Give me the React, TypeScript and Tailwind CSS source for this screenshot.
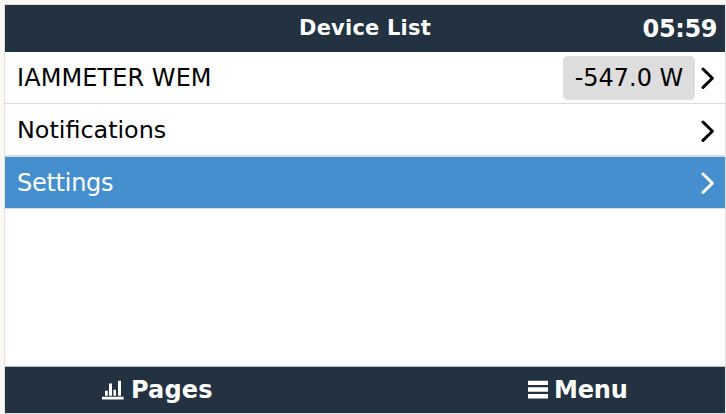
const rows = [
  { label: "IAMMETER WEM", value: "-547.0 W", spacing: "tracking-[0.07px]", offset: "" },
  { label: "Notifications", spacing: "text-[23.85px]", offset: "pt-[2px]" },
  { label: "Settings", active: true, spacing: "tracking-[-0.27px]", offset: "" },
];

function Chevron() {
  return (
    <svg width="14" height="22" viewBox="0 0 14 22" fill="none" stroke="currentColor" strokeWidth="3" strokeLinecap="round" strokeLinejoin="round" className="shrink-0">
      <path d="M2 2 L11.4 11.2 L2 20.4" />
    </svg>
  );
}

function BarsIcon() {
  return (
    <svg width="22" height="20" viewBox="0 0 22 20" fill="currentColor" className="shrink-0">
      <path d="M0 16.8h21.6v2.8H0zM3 10.8h2.8v5H3zM7 3.6h3v12.2H7zM11.4 9.7h2.6v6.1h-2.6zM16 .8h3v15h-3z" />
    </svg>
  );
}

function MenuIcon() {
  return (
    <svg width="20" height="19" viewBox="0 0 20 19" fill="currentColor" className="relative -top-px shrink-0">
      <path d="M0 .7h20v4.3H0zM0 7.2h20v4.5H0zM0 14.1h20v4.3H0z" />
    </svg>
  );
}

export default function App() {
  return (
    <div className="h-[414px] w-[726px] overflow-hidden bg-[#faf9f5] pl-1 pt-1 font-['DejaVu_Sans',sans-serif] text-[24px] leading-none">
      <div className="flex h-[410px] w-[722px] flex-col border border-[#e2e1dc] bg-white">
        <header className="grid h-[47px] shrink-0 grid-cols-[1fr_auto_1fr] items-center bg-[#233240] font-bold text-white">
          <span />
          <h1 className="pb-px text-[21px] tracking-[0.2px]">Device List</h1>
          <time className="pr-2 text-right tracking-[-0.4px]">05:59</time>
        </header>
        <main className="flex-1">
          {rows.map((row) => (
            <div
              key={row.label}
              className={
                row.active
                  ? "flex h-[53px] items-center border-y border-[#dcdcdc] bg-[#468fcf] pl-3 pr-[10px] text-white"
                  : `flex h-[52px] items-center border-b border-[#dcdcdc] pl-3 pr-[10px] text-black ${row.offset}`
              }
            >
              <span className={`flex-1 ${row.spacing}`}>{row.label}</span>
              {row.value && (
                <span className="mr-[6px] flex h-[44px] w-[132px] items-center justify-center rounded-[5px] bg-[#dddddd]">
                  {row.value}
                </span>
              )}
              <Chevron />
            </div>
          ))}
        </main>
        <footer className="flex h-[47px] shrink-0 items-center border-t border-[#b9bec2] bg-[#233240] font-bold text-white">
          <button className="flex w-1/2 items-center gap-[7px] pl-[97px] tracking-[0.15px]">
            <BarsIcon />
            Pages
          </button>
          <button className="flex w-1/2 items-center gap-[6px] pl-[163px] tracking-[-0.15px]">
            <MenuIcon />
            Menu
          </button>
        </footer>
      </div>
    </div>
  );
}
